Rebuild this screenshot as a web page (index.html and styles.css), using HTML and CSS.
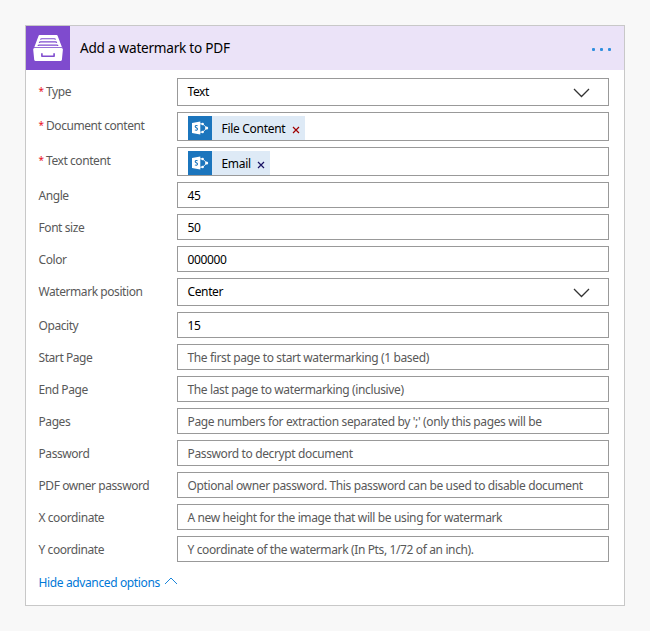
FILE: index.html
```html
<!DOCTYPE html>
<html lang="en">
<head>
<meta charset="utf-8">
<title>Add a watermark to PDF</title>
<link rel="stylesheet" href="styles.css">
</head>
<body>
<svg width="0" height="0" class="defs">
  <symbol id="sp" viewBox="0 0 24 24">
    <path fill="#fff" d="M4 7 12.300 5.600v12.800L4 17z"/>
    <path fill="none" stroke="#1b75bd" stroke-width="1.100" d="M9.600 9.900C8.800 9.300 7.200 9.400 7.200 10.600S9.500 11.800 9.500 13.100 7.900 14.500 6.900 13.900"/>
    <path fill="none" stroke="#fff" stroke-opacity=".8" stroke-width="1" d="M12 7.800h2.500l4.500 4.200-4.500 4.200H12"/>
    <circle cx="14.600" cy="8" r="1.300" fill="#fff"/><circle cx="18.600" cy="12" r="1.600" fill="#fff"/><circle cx="14.600" cy="16" r="1.300" fill="#fff"/>
  </symbol>
</svg>
<main class="card">
  <header class="head">
    <span class="logo">
      <svg width="44" height="44" viewBox="0 0 44 44">
        <path fill="#fff" d="M13.600 9h17q.8 0 1 .8L36.300 22H8L12.600 9.800q.2-.8 1-.8z"/>
        <path fill="none" stroke="#7f4bce" stroke-width="1.100" d="M14.500 13.600q.2-.9 1.200-.9h12.600q1 0 1.200.9M13.300 16.800q.2-.9 1.200-.9h15q1 0 1.200.9M12 20q.2-.9 1.200-.9h17.600q1 0 1.200.9"/>
        <path fill="none" stroke="#7f4bce" stroke-width=".8" d="M8 21.500h28"/>
        <path fill="#fff" d="M8.500 21.900h27q1.500 0 1.400 1.500l-1 10.300q-.2 1.300-1.500 1.300H9.700q-1.300 0-1.500-1.300l-1-10.300q-.1-1.500 1.300-1.500z"/>
        <path fill="none" stroke="#7f4bce" stroke-width="1.600" stroke-linejoin="round" d="M15.900 27.200v3h12.200v-3"/>
      </svg>
    </span>
    <h1>Add a watermark to PDF</h1>
    <span class="more"><i></i><i></i><i></i></span>
  </header>
  <div class="form">
    <div class="row sel"><label><b>*</b>Type</label><div class="box"><span>Text</span><svg class="chev" width="17" height="10"><path d="M1 1l7.500 7.500L16 1"/></svg></div></div>
    <div class="row tok"><label><b>*</b>Document content</label><div class="box"><div class="token"><svg width="24" height="24"><use href="#sp"/></svg><span class="name">File Content</span><svg class="x red" width="8" height="8"><path d="M1 1l6 6M7 1 1 7"/></svg></div></div></div>
    <div class="row tok"><label><b>*</b>Text content</label><div class="box"><div class="token email"><svg width="24" height="24"><use href="#sp"/></svg><span class="name">Email</span><svg class="x" width="8" height="8"><path d="M1 1l6 6M7 1 1 7"/></svg></div></div></div>
    <div class="row"><label>Angle</label><div class="box"><span>45</span></div></div>
    <div class="row"><label>Font size</label><div class="box"><span>50</span></div></div>
    <div class="row"><label>Color</label><div class="box"><span>000000</span></div></div>
    <div class="row sel"><label>Watermark position</label><div class="box"><span>Center</span><svg class="chev" width="17" height="10"><path d="M1 1l7.500 7.500L16 1"/></svg></div></div>
    <div class="row"><label>Opacity</label><div class="box"><span>15</span></div></div>
    <div class="row hint"><label>Start Page</label><div class="box"><span>The first page to start watermarking (1 based)</span></div></div>
    <div class="row hint"><label>End Page</label><div class="box"><span>The last page to watermarking (inclusive)</span></div></div>
    <div class="row hint"><label>Pages</label><div class="box"><span>Page numbers for extraction separated by ';' (only this pages will be</span></div></div>
    <div class="row hint"><label>Password</label><div class="box"><span>Password to decrypt document</span></div></div>
    <div class="row hint"><label>PDF owner password</label><div class="box"><span>Optional owner password. This password can be used to disable document</span></div></div>
    <div class="row hint"><label>X coordinate</label><div class="box"><span>A new height for the image that will be using for watermark</span></div></div>
    <div class="row hint"><label>Y coordinate</label><div class="box"><span>Y coordinate of the watermark (In Pts, 1/72 of an inch).</span></div></div>
  </div>
  <a class="advanced">Hide advanced options<svg width="14" height="8"><path d="M1 7l6-6 6 6"/></svg></a>
</main>
</body>
</html>
```
FILE: styles.css
```css
* { box-sizing: border-box; }
body { margin: 0; padding: 25px; background: #f8f8f8; font: 12px/16px "Noto Sans", "Open Sans", sans-serif; letter-spacing: -.37px; color: #000; }
.defs { position: absolute; }
.card { width: 600px; height: 581px; background: #fff; border: 1px solid #c8c8c8; }
.head { display: flex; align-items: center; height: 44px; background: #ebe3f8; }
.logo { width: 44px; height: 44px; background: #7f4bce; }
.head h1 { flex: 1; margin: 0 0 0 10px; font-size: 13.6px; line-height: 20px; font-weight: 400; letter-spacing: -.25px; }
.more { display: flex; gap: 5px; margin: 2px 13px 0 0; }
.more i { width: 3px; height: 3px; border-radius: 1px; background: #2f8fdf; }
.form { display: flex; flex-direction: column; gap: 6px; padding: 8px 15px 0 12.5px; }
.row { display: flex; height: 26px; }
.row.sel { height: 28px; }
.row.tok { height: 29px; }
.row label { display: flex; flex: none; width: 138.5px; padding-top: 6px; color: #595959; white-space: nowrap; letter-spacing: -.43px; }
.row b { width: 7.5px; color: #e81123; font-size: 10px; font-weight: 400; line-height: 15px; }
.box { flex: 1; min-width: 0; display: flex; align-items: center; justify-content: space-between; padding: 0 18px 0 9.5px; border: 1px solid #999; white-space: nowrap; }
.box > span { padding-top: 2px; }
.sel .box > span { padding-top: 0; }
.hint .box { color: #595959; }
.chev { fill: none; stroke: #333; stroke-width: 1.3; }
.sel .chev { margin-top: 1px; }
.tok .box { padding: 3px 0 0 10px; align-items: flex-start; }
.token { display: flex; align-items: center; width: 117px; height: 24px; background: #deeaf6; color: #000; }
.token > svg:first-child { background: #1b75bd; }
.token .name { flex: 1; padding: 2px 0 0 9.5px; letter-spacing: -.3px; }
.token.email { width: 82px; }
.x { margin: 3px 5px 0 0; fill: none; stroke: #1b1464; stroke-width: 1.2; }
.x.red { stroke: #a00000; }
.advanced { display: flex; align-items: center; gap: 4px; margin: 13px 0 0 12.5px; color: #0078d7; }
.advanced svg { margin-top: -4px; fill: none; stroke: #0078d7; stroke-width: .9; }
```
